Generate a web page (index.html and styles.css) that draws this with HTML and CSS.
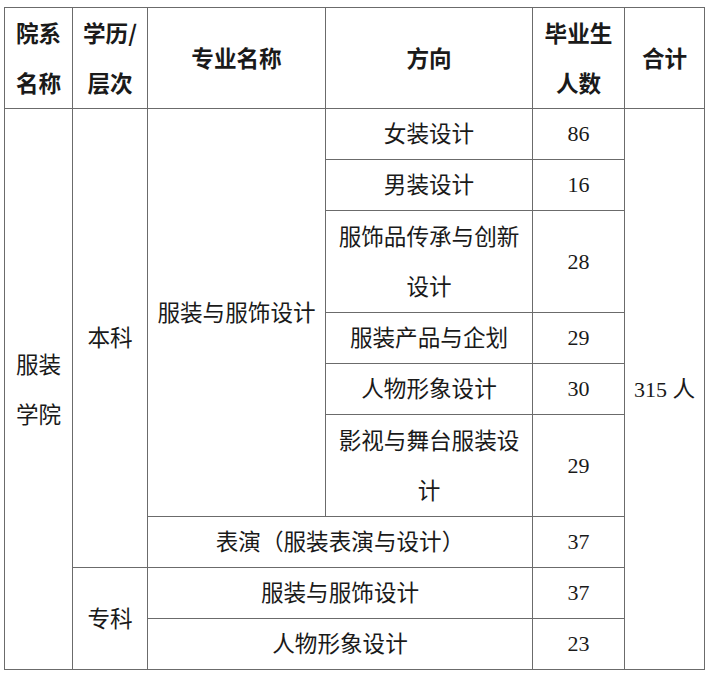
FILE: index.html
```html
<!DOCTYPE html>
<html lang="zh-CN">
<head>
<meta charset="utf-8">
<title>毕业生人数</title>
<link rel="stylesheet" href="styles.css">
</head>
<body>
<div class="page">
<table class="grad">
  <colgroup>
    <col class="c1"><col class="c2"><col class="c3"><col class="c4"><col class="c5"><col class="c6">
  </colgroup>
  <thead>
    <tr class="head">
      <th>院系<br>名称</th>
      <th>学历/<br>层次</th>
      <th>专业名称</th>
      <th>方向</th>
      <th>毕业生<br>人数</th>
      <th>合计</th>
    </tr>
  </thead>
  <tbody>
    <tr class="r1">
      <td rowspan="9" class="two">服装<br>学院</td>
      <td rowspan="7">本科</td>
      <td rowspan="6">服装与服饰设计</td>
      <td>女装设计</td>
      <td class="num">86</td>
      <td rowspan="9" class="num">315 <span class="cjk">人</span></td>
    </tr>
    <tr class="r1">
      <td>男装设计</td>
      <td class="num">16</td>
    </tr>
    <tr class="r2">
      <td class="two">服饰品传承与创新<br>设计</td>
      <td class="num">28</td>
    </tr>
    <tr class="r1">
      <td>服装产品与企划</td>
      <td class="num">29</td>
    </tr>
    <tr class="r1">
      <td>人物形象设计</td>
      <td class="num">30</td>
    </tr>
    <tr class="r2">
      <td class="two">影视与舞台服装设<br>计</td>
      <td class="num">29</td>
    </tr>
    <tr class="r1">
      <td colspan="2">表演（服装表演与设计）</td>
      <td class="num">37</td>
    </tr>
    <tr class="r1">
      <td rowspan="2">专科</td>
      <td colspan="2">服装与服饰设计</td>
      <td class="num">37</td>
    </tr>
    <tr class="r1">
      <td colspan="2">人物形象设计</td>
      <td class="num">23</td>
    </tr>
  </tbody>
</table>
</div>
</body>
</html>
```

FILE: styles.css
```css
html, body {
  margin: 0;
  padding: 0;
  background: #ffffff;
}

.page {
  padding: 7px 0 0 4px;
}

.grad {
  border-collapse: collapse;
  table-layout: fixed;
  width: 700px;
  font-family: "Noto Sans CJK SC", "Noto Sans", sans-serif;
  font-size: 22.6px;
  color: #1a1a1a;
}

.c1 { width: 68px; }
.c2 { width: 75px; }
.c3 { width: 178px; }
.c4 { width: 207px; }
.c5 { width: 92px; }
.c6 { width: 80px; }

.grad th,
.grad td {
  border: 1px solid #6b6b6b;
  text-align: center;
  vertical-align: middle;
}

.grad th {
  font-weight: 700;
  line-height: 50px;
  padding: 0;
}

.grad td {
  font-weight: 400;
  line-height: 48px;
  padding: 0 0 2px 0;
}

.grad td.two {
  line-height: 50px;
  padding: 0 0 1px 0;
}

.grad td.num {
  font-family: "Liberation Serif", "Times New Roman", serif;
  font-size: 22px;
  line-height: 50px;
  padding: 0;
}

.head { height: 101px; }
.r1 { height: 51px; }
.r2 { height: 102px; }

.cjk {
  font-family: "Noto Sans CJK SC", sans-serif;
  font-size: 22.6px;
}
```
